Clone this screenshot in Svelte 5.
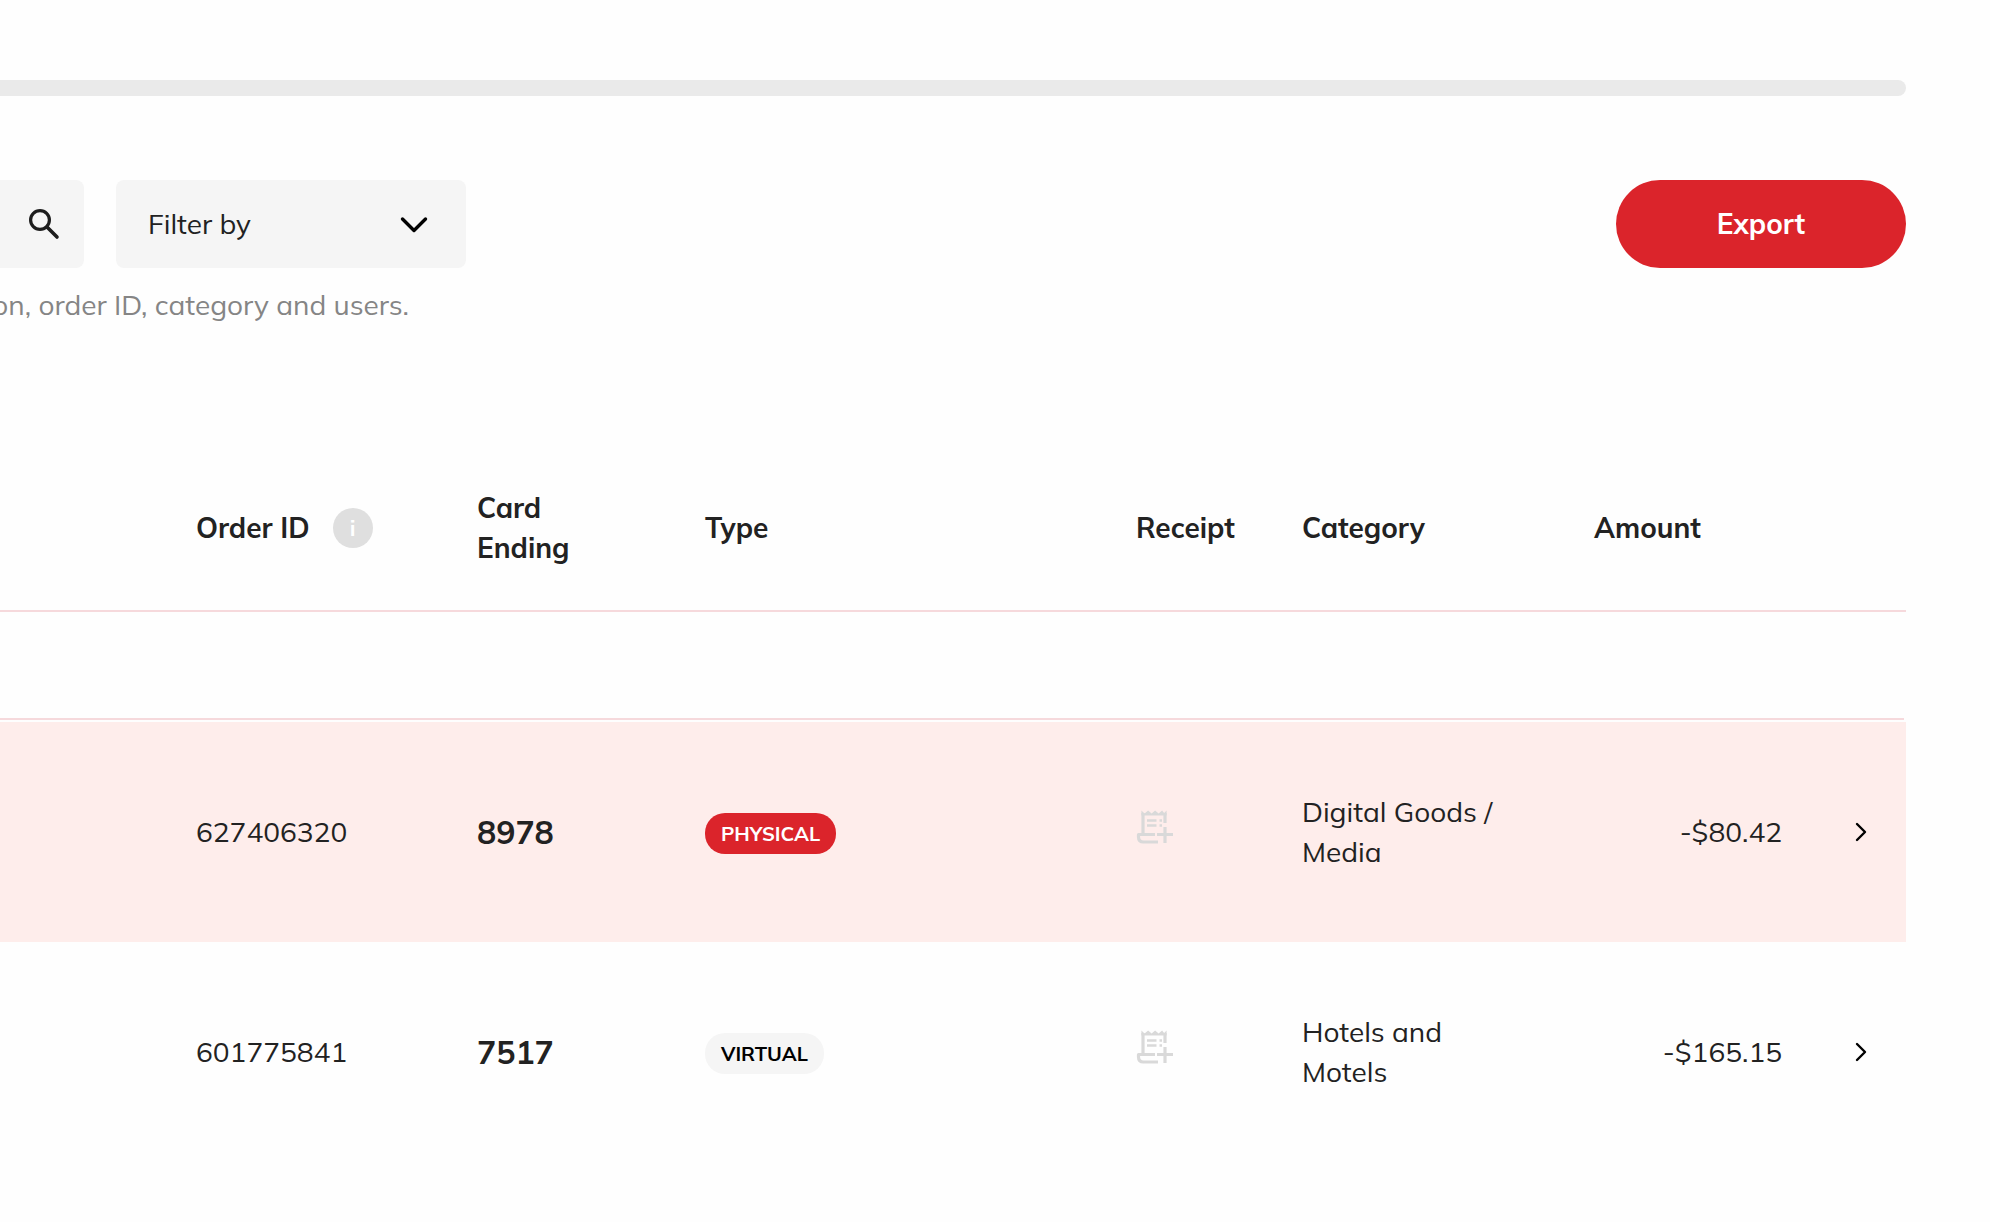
<script lang="ts">
	interface Transaction {
		orderId: string;
		card: string;
		type: 'physical' | 'virtual';
		category: string;
		amount: string;
	}

	const transactions: Transaction[] = [
		{ orderId: '627406320', card: '8978', type: 'physical', category: 'Digital Goods / Media', amount: '-$80.42' },
		{ orderId: '601775841', card: '7517', type: 'virtual', category: 'Hotels and Motels', amount: '-$165.15' }
	];

	let search = $state('');
	let filter = $state('');
	let selected = $state('627406320');
</script>

<main class="page">
	<div class="progress"></div>

	<div class="toolbar">
		<div class="search">
			<input type="text" aria-label="Search transactions" bind:value={search} />
			<button class="icon-btn" aria-label="Search">
				<svg width="32" height="32" viewBox="0 0 32 32" fill="none" stroke="#1d1d1d">
					<circle cx="12" cy="12" r="9.4" stroke-width="3.2" />
					<path d="M19 19l10 10" stroke-width="3.6" stroke-linecap="round" />
				</svg>
			</button>
		</div>
		<div class="filter">
			<select aria-label="Filter by" bind:value={filter}>
				<option value="">Filter by</option>
			</select>
			<svg class="caret" width="28" height="18" viewBox="0 0 28 18" fill="none" stroke="#000" stroke-width="3.4" stroke-linecap="round" stroke-linejoin="round">
				<path d="M2.500 3l11.500 11.500L25.500 3" />
			</svg>
		</div>
		<button class="export">Export</button>
	</div>
	<p class="hint">on, order ID, category and users.</p>

	<table>
		<colgroup>
			<col class="w-order" />
			<col class="w-card" />
			<col />
			<col class="w-receipt" />
			<col class="w-category" />
			<col class="w-amount" />
			<col class="w-open" />
		</colgroup>
		<thead>
			<tr>
				<th class="order">
					<div class="with-info">
						Order ID
						<button class="info" aria-label="About order ID">i</button>
					</div>
				</th>
				<th class="card-head">Card Ending</th>
				<th>Type</th>
				<th>Receipt</th>
				<th>Category</th>
				<th>Amount</th>
				<th></th>
			</tr>
		</thead>
		<tbody>
			<tr>
				<td class="group" colspan="7"><div class="group-line"></div></td>
			</tr>
			{#each transactions as t (t.orderId)}
				<tr class="row" class:selected={selected === t.orderId} onclick={() => (selected = t.orderId)}>
					<td class="order">{t.orderId}</td>
					<td class="card">{t.card}</td>
					<td><span class="badge {t.type}">{t.type}</span></td>
					<td>
						<button class="icon-btn receipt" aria-label="Add receipt">
							<svg width="38" height="36" viewBox="0 0 38 36" fill="none" stroke="#d9d9d9" stroke-width="3.2">
								<path d="M7 24V4M29 4v10" />
								<path d="M5.400 1.500l3.200 3 3.500-3 3.500 3 3.500-3 3.500 3 3.500-3 2 2.500 2.500-2.500v5H5.400z" fill="#d9d9d9" stroke="none" />
								<path d="M11 11.500h9.500M11 16.500h9.500M23.500 11.500h2.500M23.500 16.500h2.500" stroke-width="2.600" />
								<path d="M19 25.500H2.500v2.500q0 5 5 5H22" stroke-linejoin="round" />
								<path d="M21 25.500h16M29 18v16" />
							</svg>
						</button>
					</td>
					<td class="category">{t.category}</td>
					<td class="amount">{t.amount}</td>
					<td class="open">
						<button class="icon-btn" aria-label="Open order {t.orderId}">
							<svg width="14" height="20" viewBox="0 0 14 20" fill="none" stroke="#000" stroke-width="2.400" stroke-linecap="round" stroke-linejoin="round">
								<path d="M3 2l8 8-8 8" />
							</svg>
						</button>
					</td>
				</tr>
			{/each}
		</tbody>
	</table>
</main>

<style>
	:global(body) {
		margin: 0;
		background: #fefefe;
	}
	.page {
		padding: 80px 84px 60px 0;
		font-family: Mulish, Lato, sans-serif;
		font-size: 28px;
		line-height: 40px;
		color: #222;
		overflow: hidden;
	}
	button, input, select {
		font: inherit;
		color: inherit;
		border: none;
	}
	button {
		padding: 0;
		cursor: pointer;
	}
	.progress {
		height: 16px;
		border-radius: 0 8px 8px 0;
		background: #eaeaea;
	}
	.toolbar {
		display: flex;
		gap: 32px;
		margin-top: 84px;
		height: 88px;
	}
	.search {
		display: flex;
		align-items: center;
		justify-content: flex-end;
		box-sizing: border-box;
		width: 84px;
		padding-right: 24px;
		border-radius: 0 8px 8px 0;
		background: #f5f5f5;
	}
	.search input {
		width: 0;
		flex: 1;
		min-width: 0;
		padding: 0;
		background: transparent;
		outline: none;
	}
	.icon-btn {
		display: flex;
		background: transparent;
	}
	.filter {
		position: relative;
		width: 350px;
	}
	.filter select {
		appearance: none;
		width: 100%;
		height: 100%;
		padding: 0 80px 0 32px;
		border-radius: 8px;
		background: #f5f5f5;
	}
	.caret {
		position: absolute;
		right: 38px;
		top: 36px;
		pointer-events: none;
	}
	.export {
		width: 290px;
		margin-left: auto;
		border-radius: 44px;
		background: #db242b;
		color: #fff;
		font-weight: 700;
	}
	/* hint is right-aligned so it runs off the left edge together with the search box */
	.hint {
		display: flex;
		justify-content: flex-end;
		width: 409px;
		margin: 17px 0 0;
		color: #858585;
		white-space: nowrap;
	}
	table {
		width: 100%;
		margin-top: 121px;
		table-layout: fixed;
		border-collapse: separate;
		border-spacing: 0;
	}
	.w-order { width: 477px; }
	.w-card { width: 228px; }
	.w-receipt { width: 166px; }
	.w-category { width: 292px; }
	.w-amount { width: 188px; }
	.w-open { width: 124px; }
	th, td {
		padding: 0;
		text-align: left;
		vertical-align: middle;
	}
	th {
		height: 164px;
		border-bottom: 2px solid #f6d9dc;
		font-weight: 700;
	}
	th.order, td.order {
		padding-left: 196px;
	}
	.card-head {
		padding-right: 110px;
	}
	.with-info {
		display: flex;
		align-items: center;
		gap: 23px;
	}
	.info {
		width: 40px;
		height: 40px;
		border-radius: 50%;
		background: #dfdfdf;
		color: #fff;
		font-size: 22px;
		line-height: 40px;
	}
	.group-line {
		height: 106px;
		margin: 0 2px 2px 0;
		border-bottom: 2px solid #f6d9dc;
	}
	.row td {
		height: 220px;
	}
	.row.selected td {
		background: #feedeb;
	}
	.card {
		font-size: 32px;
		font-weight: 700;
	}
	.badge {
		display: inline-block;
		padding: 0 16px;
		border-radius: 20px;
		font-size: 20px;
		font-weight: 700;
		line-height: 41px;
		text-transform: uppercase;
		vertical-align: middle;
	}
	.badge.physical {
		background: #db242b;
		color: #fff;
	}
	.badge.virtual {
		background: #f5f5f5;
		color: #000;
	}
	.receipt {
		padding-bottom: 10px;
	}
	.row .category {
		padding-right: 80px;
	}
	.row .amount {
		text-align: right;
	}
	.row .open {
		padding-right: 38px;
	}
	.open .icon-btn {
		margin-left: auto;
	}
</style>
